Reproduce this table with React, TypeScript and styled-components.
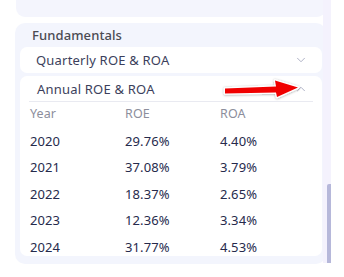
import React from "react";
import styled, { createGlobalStyle } from "styled-components";
import { ChevronDown, ChevronUp } from "lucide-react";

const Global = createGlobalStyle`
  html, body { margin: 0; padding: 0; background: #ffffff; }
  body { font-family: "Noto Sans", "Open Sans", sans-serif; }
  * { box-sizing: border-box; }
`;

const Frame = styled.div`
  width: 344px;
  height: 277px;
  display: flex;
  align-items: flex-start;
  overflow: hidden;
`;

const Content = styled.div`
  width: 323px;
  padding-left: 15px;
  display: flex;
  flex-direction: column;
  gap: 6px;
`;

const TopCard = styled.div`
  width: 310px;
  margin-left: 1px;
  height: 17px;
  background: #f4f5fd;
  border-radius: 0 0 9px 9px;
`;

const ScrollTrack = styled.div`
  width: 8px;
  height: 263px;
  background: #f4f2fd;
  display: flex;
  flex-direction: column;
  justify-content: flex-end;
  padding-left: 4px;
`;

const ScrollThumb = styled.div`
  width: 4px;
  height: 79px;
  background: #b6b8da;
  border-radius: 2px 0 0 0;
`;

const Panel = styled.div`
  width: 311px;
  background: #f3f5fd;
  border-radius: 10px;
  padding: 3px 4px 8px 5px;
  display: flex;
  flex-direction: column;
  gap: 3px;
`;

const PanelTitle = styled.div`
  height: 18px;
  line-height: 18px;
  padding-left: 12px;
  font-size: 13px;
  font-weight: 500;
  color: #4a4b53;
  letter-spacing: 0.1px;
`;

const Card = styled.div`
  background: #ffffff;
  border-radius: 7px;
  display: flex;
  flex-direction: column;
`;

const CardHeader = styled.div<{ $open?: boolean }>`
  position: relative;
  height: 26px;
  margin: 0 ${(p) => (p.$open ? "9px" : "0")};
  padding: 0 ${(p) => (p.$open ? "5px" : "14px")} 0
    ${(p) => (p.$open ? "8px" : "16px")};
  display: flex;
  align-items: center;
  justify-content: space-between;
  font-size: 13px;
  color: #3c3f5c;
  letter-spacing: 0.2px;
  border-bottom: ${(p) => (p.$open ? "1px solid #e9eaf1" : "none")};
  svg.chev {
    color: #a9acc2;
  }
`;

const Arrow = styled.svg`
  position: absolute;
  left: 192px;
  top: 1px;
  overflow: visible;
`;

const Table = styled.div`
  display: grid;
  grid-template-columns: repeat(3, 1fr);
  row-gap: 8.5px;
  margin: 3px 9px 0 8px;
`;

const Cell = styled.div<{ $head?: boolean }>`
  height: 18px;
  line-height: 18px;
  padding-left: 2px;
  font-size: ${(p) => (p.$head ? "12.5px" : "13px")};
  font-weight: 400;
  color: ${(p) => (p.$head ? "#8c8e9c" : "#262a4c")};
  letter-spacing: 0.1px;
`;

const rows = [
  ["2020", "29.76%", "4.40%"],
  ["2021", "37.08%", "3.79%"],
  ["2022", "18.37%", "2.65%"],
  ["2023", "12.36%", "3.34%"],
  ["2024", "31.77%", "4.53%"],
];

const arrowPts = "4,11.5 55,9.5 54,3.5 77,10.5 56,20 55,15.5 4,16.5";

export default function App() {
  return (
    <>
      <Global />
      <Frame>
        <Content>
          <TopCard />
          <Panel>
            <PanelTitle>Fundamentals</PanelTitle>
            <Card>
              <CardHeader>
                <span>Quarterly ROE &amp; ROA</span>
                <ChevronDown className="chev" size={14} strokeWidth={1.6} />
              </CardHeader>
            </Card>
            <Card>
              <CardHeader $open>
                <span>Annual ROE &amp; ROA</span>
                <ChevronUp className="chev" size={14} strokeWidth={1.6} />
                <Arrow width="82" height="24" viewBox="0 0 82 24">
                  <defs>
                    <filter id="sh" x="-20%" y="-50%" width="140%" height="200%">
                      <feDropShadow dx="0" dy="0.5" stdDeviation="0.8" floodColor="#000" floodOpacity="0.35" />
                    </filter>
                  </defs>
                  <polygon
                    points={arrowPts}
                    fill="#f00000"
                    stroke="#ffffff"
                    strokeWidth="2.5"
                    strokeLinejoin="round"
                    filter="url(#sh)"
                  />
                  <polygon points={arrowPts} fill="#f00000" />
                </Arrow>
              </CardHeader>
              <Table>
                <Cell $head>Year</Cell>
                <Cell $head>ROE</Cell>
                <Cell $head>ROA</Cell>
                {rows.map((r) =>
                  r.map((v, i) => <Cell key={r[0] + i}>{v}</Cell>)
                )}
              </Table>
            </Card>
          </Panel>
        </Content>
        <ScrollTrack>
          <ScrollThumb />
        </ScrollTrack>
      </Frame>
    </>
  );
}
